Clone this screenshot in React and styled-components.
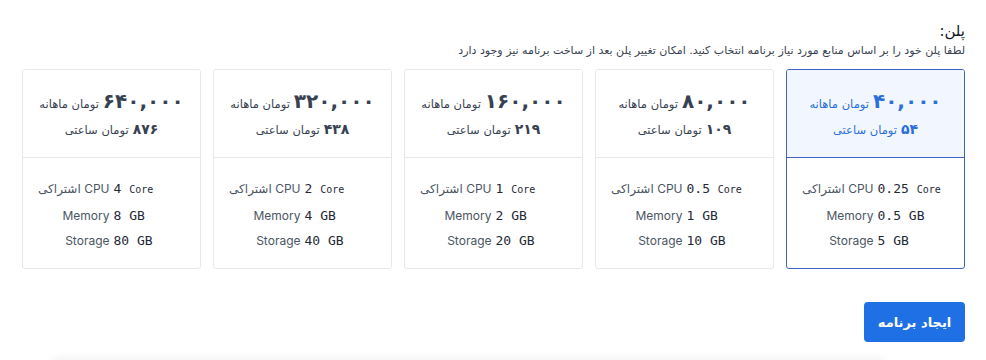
import styled, {createGlobalStyle} from 'styled-components';

const GlobalStyle = createGlobalStyle`
  html, body {
    margin: 0;
    padding: 0;
    background: #fff;
  }
  body {
    font-family: "DejaVu Sans", "Noto Sans", sans-serif;
    color: #1f2937;
  }
`;

const plans = [
  {month: '۴۰,۰۰۰', hour: '۵۴', cpu: '0.25', memory: '0.5', storage: '5', selected: true},
  {month: '۸۰,۰۰۰', hour: '۱۰۹', cpu: '0.5', memory: '1', storage: '10'},
  {month: '۱۶۰,۰۰۰', hour: '۲۱۹', cpu: '1', memory: '2', storage: '20'},
  {month: '۳۲۰,۰۰۰', hour: '۴۳۸', cpu: '2', memory: '4', storage: '40'},
  {month: '۶۴۰,۰۰۰', hour: '۸۷۶', cpu: '4', memory: '8', storage: '80'},
];

function PlanCard({plan}) {
  return (
    <Card $selected={plan.selected}>
      <Price $selected={plan.selected}>
        <PriceLine>
          <BigNum>{plan.month}</BigNum>
          <Unit>تومان ماهانه</Unit>
        </PriceLine>
        <PriceLine>
          <SmallNum>{plan.hour}</SmallNum>
          <Unit>تومان ساعتی</Unit>
        </PriceLine>
      </Price>
      <SpecTable>
        <Label dir="rtl">CPU اشتراکی</Label>
        <Value>
          {plan.cpu} <Core>Core</Core>
        </Value>
        <Label>Memory</Label>
        <Value>{plan.memory} GB</Value>
        <Label>Storage</Label>
        <Value>{plan.storage} GB</Value>
      </SpecTable>
    </Card>
  );
}

export default function App() {
  return (
    <>
      <GlobalStyle />
      <Page dir="rtl">
        <Title>پلن:</Title>
        <Hint>لطفا پلن خود را بر اساس منابع مورد نیاز برنامه انتخاب کنید. امکان تغییر پلن بعد از ساخت برنامه نیز وجود دارد</Hint>
        <Cards>
          {plans.map((p, i) => (
            <PlanCard key={i} plan={p} />
          ))}
        </Cards>
        <Footer>
          <SubmitButton>ایجاد برنامه</SubmitButton>
        </Footer>
      </Page>
    </>
  );
}

const Page = styled.div`
  padding: 21px 21px 0 22px;
  height: 360px;
  box-sizing: border-box;
  position: relative;
  overflow: hidden;

  &::after {
    content: '';
    position: absolute;
    left: 50px;
    right: 100px;
    bottom: -14px;
    height: 14px;
    box-shadow: 0 -2px 10px rgba(0, 0, 0, 0.06);
    border-radius: 8px;
  }
`;

const Title = styled.div`
  font-size: 15px;
  font-weight: 500;
  color: #111827;
  line-height: 20px;
`;

const Hint = styled.div`
  margin-top: 2px;
  font-size: 11px;
  color: #374151;
  line-height: 16px;
`;

const Cards = styled.div`
  margin-top: 10px;
  display: grid;
  grid-template-columns: repeat(5, 179px);
  gap: 12px;
`;

const Card = styled.div`
  height: 200px;
  box-sizing: border-box;
  border: 1px solid ${p => (p.$selected ? '#3f63c4' : '#e5e7eb')};
  border-radius: 3px;
  display: flex;
  flex-direction: column;
  overflow: hidden;
  background: #fff;
`;

const Price = styled.div`
  height: 88px;
  box-sizing: border-box;
  border-bottom: 1px solid ${p => (p.$selected ? '#3f63c4' : '#e5e7eb')};
  background: ${p => (p.$selected ? '#f2f6fe' : '#fff')};
  color: ${p => (p.$selected ? '#2b6fdc' : '#374151')};
  display: flex;
  flex-direction: column;
  align-items: center;
  justify-content: center;
  gap: 8px;
  padding-bottom: 1px;
`;

const PriceLine = styled.div`
  display: flex;
  align-items: baseline;
  gap: 4px;
`;

const BigNum = styled.span`
  font-size: 20px;
  font-weight: 700;
  color: inherit;
  letter-spacing: 0.5px;
`;

const SmallNum = styled.span`
  font-size: 14px;
  font-weight: 700;
`;

const Unit = styled.span`
  font-size: 11.5px;
  font-weight: 400;
`;

const SpecTable = styled.div`
  direction: ltr;
  display: grid;
  grid-template-columns: 1fr 1fr;
  column-gap: 4px;
  row-gap: 8.5px;
  align-content: start;
  align-items: baseline;
  padding-top: 22px;
  flex: 1;
`;

const Label = styled.span`
  justify-self: end;
  font-family: Inter, "DejaVu Sans", sans-serif;
  font-size: 12px;
  color: #4b5563;
  line-height: 17px;
  white-space: nowrap;
`;

const Value = styled.span`
  font-family: "DejaVu Sans Mono", "Liberation Mono", monospace;
  font-size: 13px;
  color: #1f2937;
  line-height: 17px;
  white-space: pre;
`;

const Core = styled.span`
  font-size: 10px;
`;

const Footer = styled.div`
  display: flex;
  justify-content: flex-start;
  margin-top: 33px;
`;

const SubmitButton = styled.button`
  width: 101px;
  height: 40px;
  border: none;
  border-radius: 4px;
  background: #1f6fe5;
  color: #fff;
  font-family: "DejaVu Sans", sans-serif;
  font-size: 13px;
  font-weight: 700;
  cursor: pointer;
`;
